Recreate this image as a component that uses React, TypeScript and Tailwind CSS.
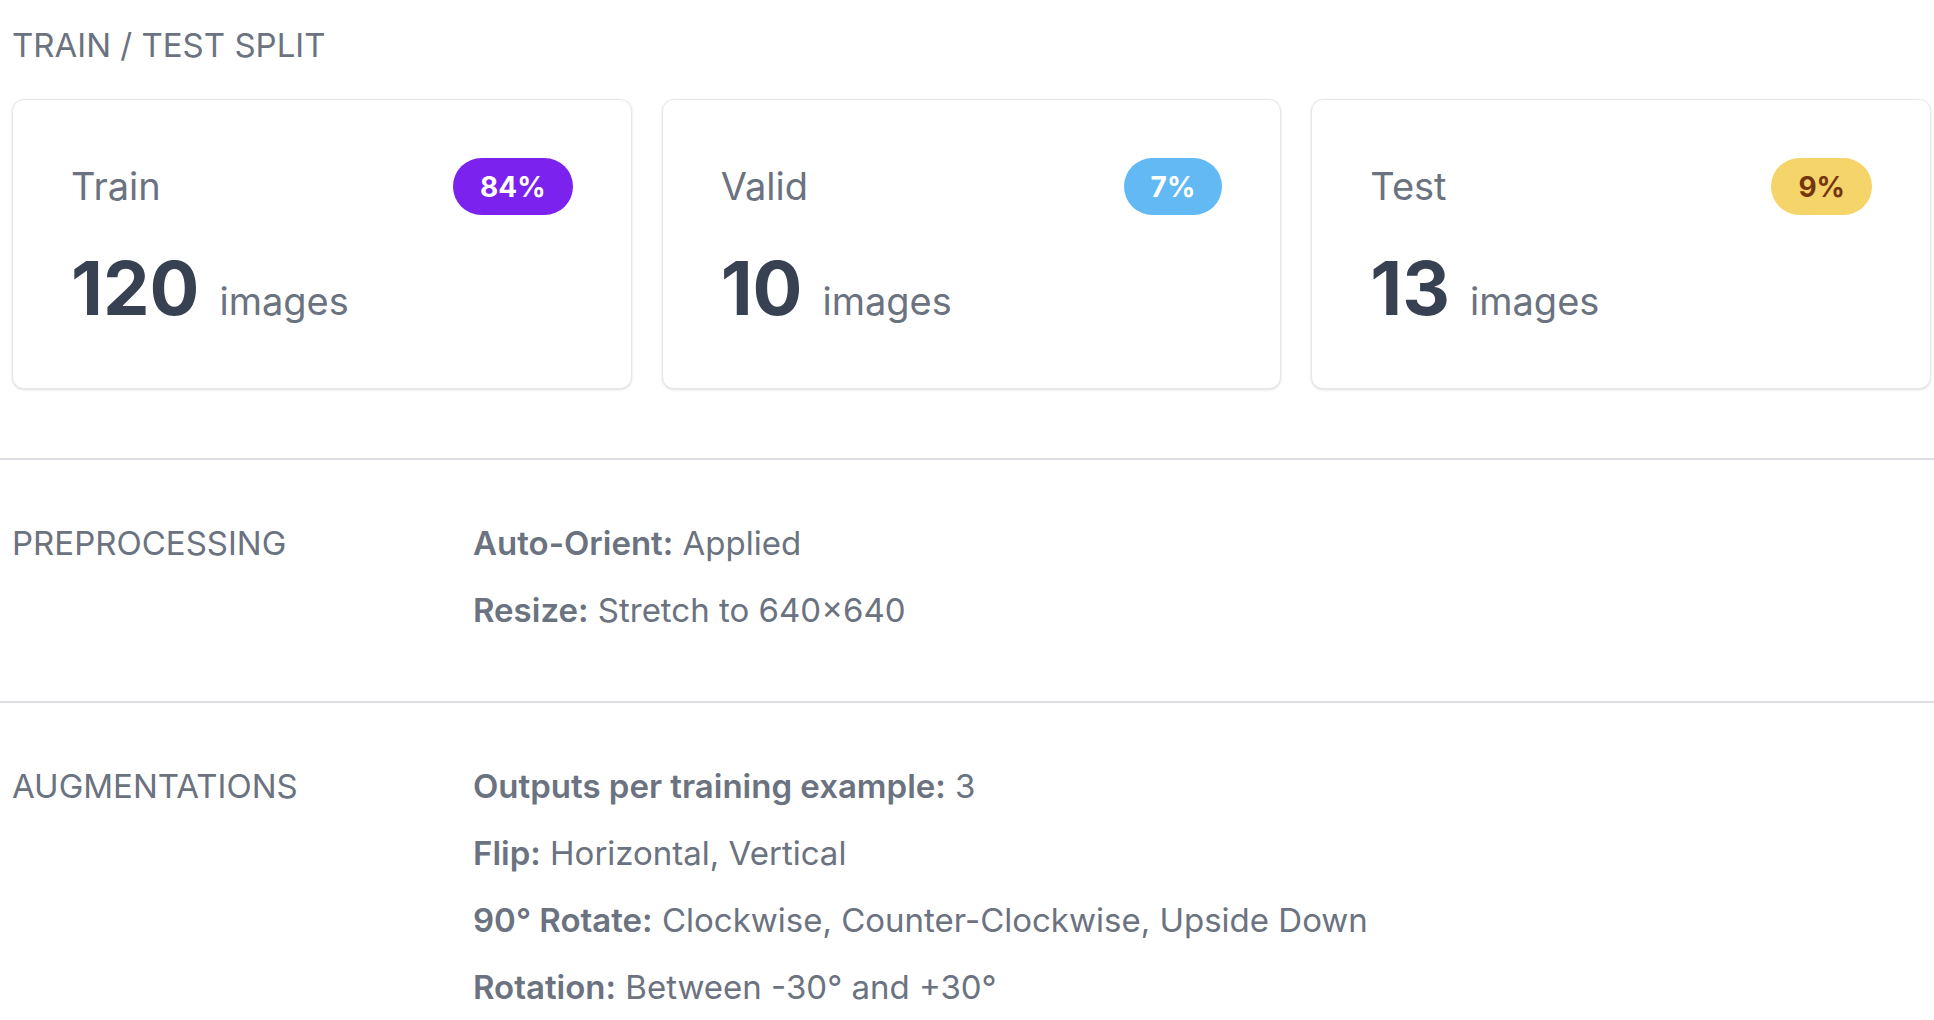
import React from 'react';

interface Split {
  name: string;
  count: number;
  percent: string;
  badge: string;
}

const splits: Split[] = [
  { name: 'Train', count: 120, percent: '84%', badge: 'bg-[#7b22ee] text-white' },
  { name: 'Valid', count: 10, percent: '7%', badge: 'bg-[#63b9f3] text-white' },
  { name: 'Test', count: 13, percent: '9%', badge: 'bg-[#f5d46a] text-[#74360f]' },
];

const preprocessing: [string, string][] = [
  ['Auto-Orient:', 'Applied'],
  ['Resize:', 'Stretch to 640×640'],
];

const augmentations: [string, string][] = [
  ['Outputs per training example:', '3'],
  ['Flip:', 'Horizontal, Vertical'],
  ['90° Rotate:', 'Clockwise, Counter-Clockwise, Upside Down'],
  ['Rotation:', 'Between -30° and +30°'],
];

function SplitCard({ split }: { split: Split }) {
  return (
    <div className="rounded-[12px] border border-[#e5e7eb] bg-white p-[58px] shadow-sm">
      <div className="flex items-center justify-between">
        <span className="text-[38px] text-[#6b7280]">{split.name}</span>
        <span
          className={`flex h-[57px] items-center rounded-full px-[27px] text-[28px] font-bold ${split.badge}`}
        >
          {split.percent}
        </span>
      </div>
      <div className="mt-[31px] flex items-baseline">
        <span className="text-[74px] font-bold leading-[84px] text-[#374151]">{split.count}</span>
        <span className="ml-[20px] text-[38px] leading-none text-[#6b7280]">images</span>
      </div>
    </div>
  );
}

function Section({ title, rows, last }: { title: string; rows: [string, string][]; last?: boolean }) {
  return (
    <div
      className={`flex border-t-2 border-[#dcdee3] pl-[12px] pt-[58px] text-[33px] leading-[50px] text-[#6b7280] ${
        last ? 'pb-0' : 'pb-[66px]'
      }`}
    >
      <div className="w-[461px] shrink-0">{title}</div>
      <div className="flex flex-col gap-[17px]">
        {rows.map(([label, value]) => (
          <div key={label}>
            <span className="font-semibold">{label}</span> {value}
          </div>
        ))}
      </div>
    </div>
  );
}

export default function App() {
  return (
    <div className="h-screen overflow-hidden bg-white font-['Inter',sans-serif]">
      {/* Train / test split */}
      <div className="pb-[69px] pl-[12px] pr-[3px] pt-[20px]">
        <h2 className="text-[33px] leading-[50px] text-[#6b7280]">TRAIN / TEST SPLIT</h2>
        <div className="mt-[29px] grid grid-cols-3 gap-[30px]">
          {splits.map((s) => (
            <SplitCard key={s.name} split={s} />
          ))}
        </div>
      </div>

      <Section title="PREPROCESSING" rows={preprocessing} />
      <Section title="AUGMENTATIONS" rows={augmentations} last />
    </div>
  );
}
